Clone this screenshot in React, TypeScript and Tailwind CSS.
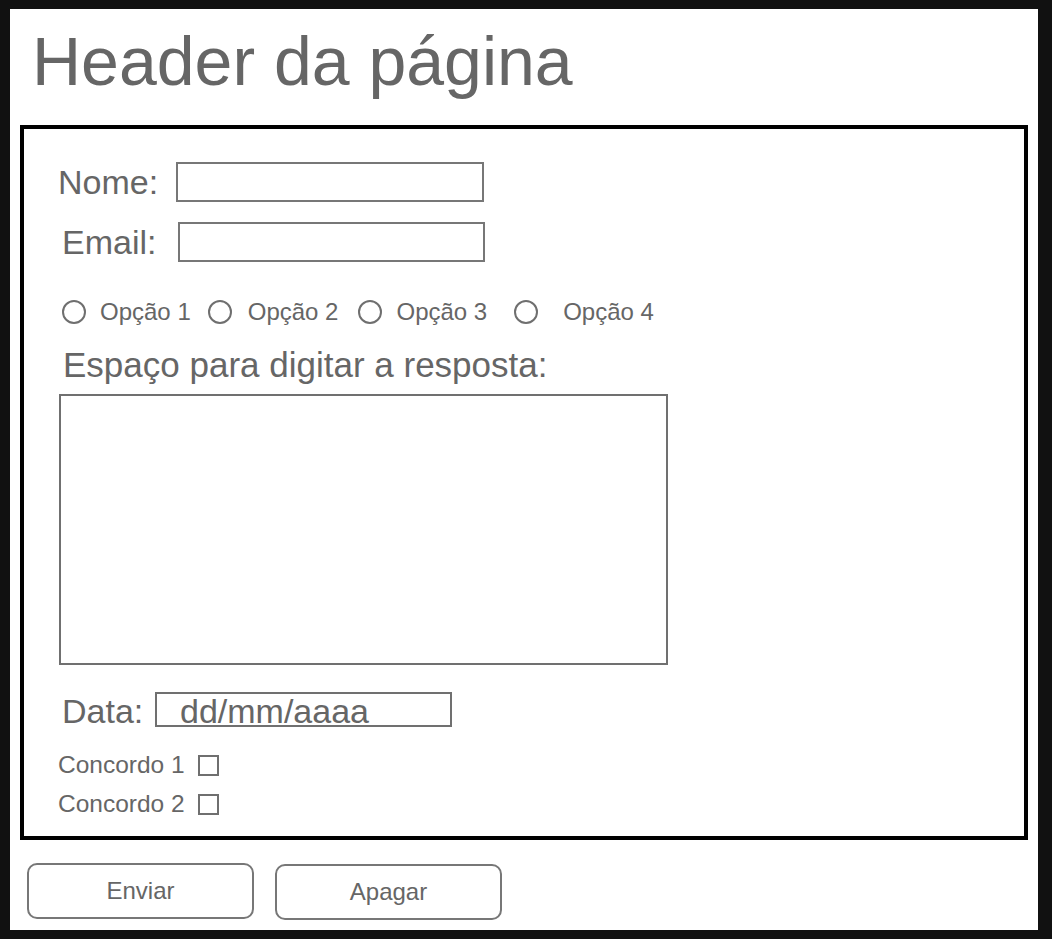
import React from 'react';

const Radio: React.FC<{ className?: string }> = ({ className = '' }) => (
  <span className={`inline-block w-[24px] h-[24px] rounded-full border-2 border-[#6f6f6f] shrink-0 ${className}`}></span>
);

const Checkbox: React.FC = () => (
  <span className="inline-block w-[21px] h-[21px] border-2 border-[#6f6f6f] shrink-0"></span>
);

const App: React.FC = () => {
  return (
    <div className="w-[1052px] h-[939px] bg-[#111111] pt-[9px] pl-[10px] pr-[14px] pb-[9px] font-['Liberation_Sans',Arial,sans-serif] text-[#666666]">
      <div className="w-full h-full bg-white flex flex-col">
        {/* Header */}
        <h1 className="mt-[12px] ml-[22px] text-[68px] leading-[80px]">Header da página</h1>

        {/* Form */}
        <form className="mt-[24px] ml-[10px] w-[1008px] h-[715px] border-4 border-black flex flex-col">
          <div className="mt-[33px] flex items-center h-[40px]">
            <label className="ml-[34px] w-[118px] text-[34px] leading-[40px]">Nome:</label>
            <div className="w-[308px] h-[40px] border-2 border-[#777777]"></div>
          </div>

          <div className="mt-[20px] flex items-center h-[40px]">
            <label className="ml-[38px] w-[116px] text-[34px] leading-[40px]">Email:</label>
            <div className="w-[307px] h-[40px] border-2 border-[#777777]"></div>
          </div>

          <div className="mt-[37px] flex items-center h-[26px] text-[24px] leading-[26px]">
            <Radio className="ml-[38px]" />
            <span className="ml-[14px]">Opção 1</span>
            <Radio className="ml-[17px]" />
            <span className="ml-[16px]">Opção 2</span>
            <Radio className="ml-[20px]" />
            <span className="ml-[14px]">Opção 3</span>
            <Radio className="ml-[27px]" />
            <span className="ml-[25px]">Opção 4</span>
          </div>

          <label className="mt-[20px] ml-[39px] text-[35px] leading-[40px]">Espaço para digitar a resposta:</label>

          <div className="mt-[9px] ml-[35px] w-[609px] h-[271px] border-2 border-[#707070]"></div>

          <div className="mt-[27px] flex items-center h-[35px]">
            <label className="ml-[38px] w-[93px] pt-[4px] text-[34px] leading-[35px]">Data:</label>
            <div className="w-[297px] h-[35px] border-2 border-[#707070] flex items-center pl-[23px] pt-[4px] text-[34px] leading-[31px] overflow-visible">
              dd/mm/aaaa
            </div>
          </div>

          <div className="mt-[27px] flex items-center h-[22px]">
            <span className="ml-[34px] w-[140px] text-[24.5px] leading-[22px]">Concordo 1</span>
            <Checkbox />
          </div>

          <div className="mt-[17px] flex items-center h-[22px]">
            <span className="ml-[34px] w-[140px] text-[24.5px] leading-[22px]">Concordo 2</span>
            <Checkbox />
          </div>
        </form>

        {/* Buttons */}
        <div className="mt-[23px] flex items-start">
          <button className="ml-[17px] w-[227px] h-[56px] rounded-[10px] border-2 border-[#777777] text-[24px] text-[#666666]">
            Enviar
          </button>
          <button className="ml-[21px] mt-px w-[227px] h-[56px] rounded-[10px] border-2 border-[#777777] text-[24px] text-[#666666]">
            Apagar
          </button>
        </div>
      </div>
    </div>
  );
};

export default App;
